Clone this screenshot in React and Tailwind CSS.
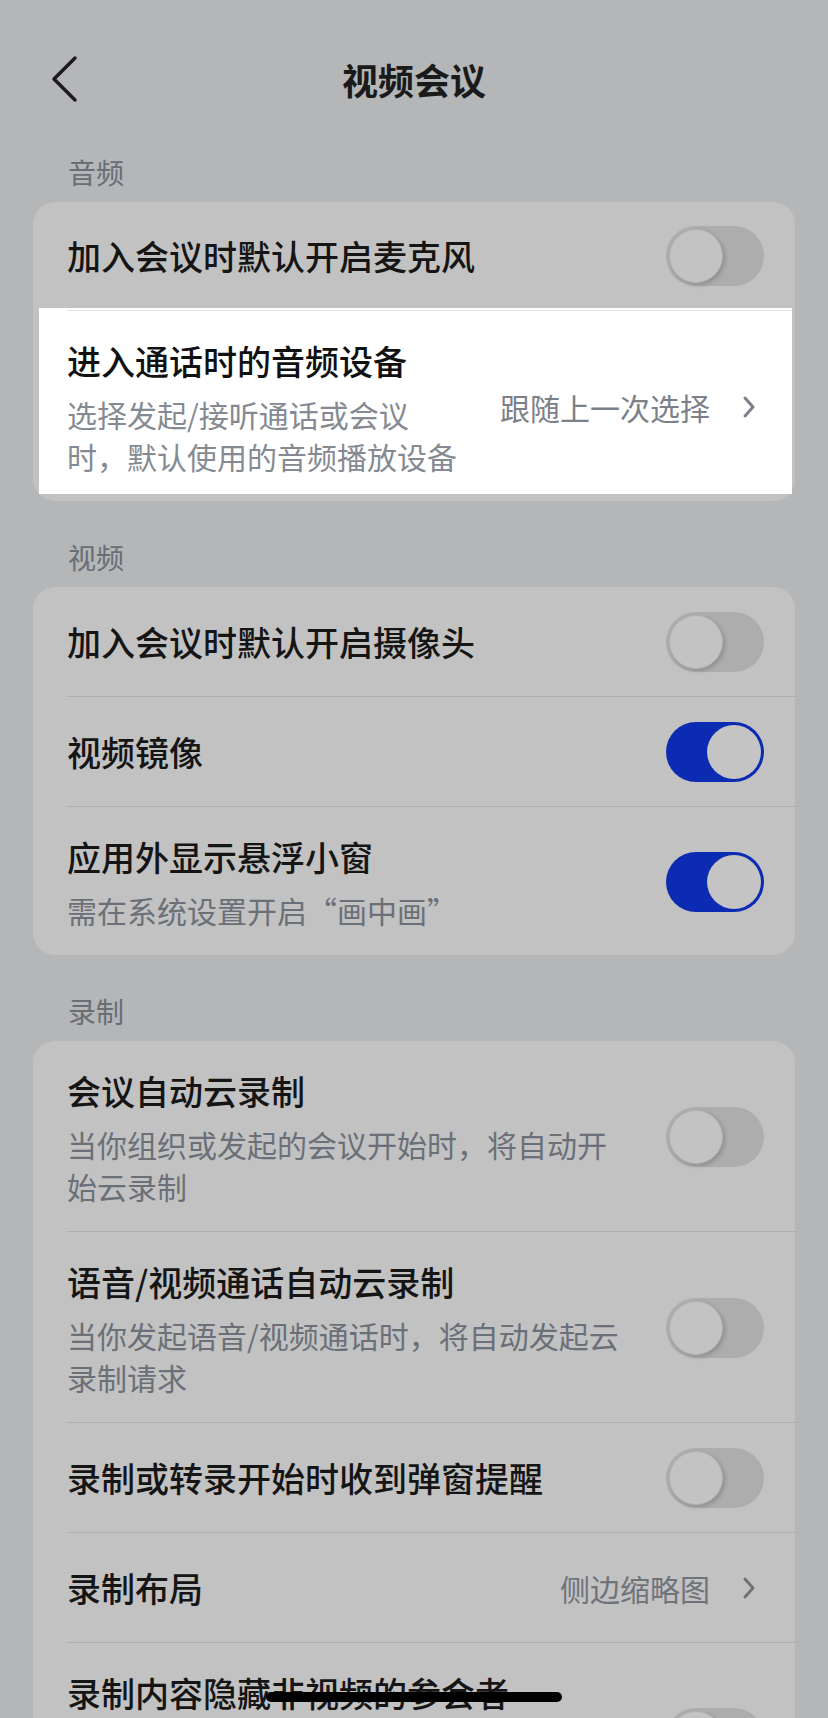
import React from 'react';

const Toggle = ({ on }) =>
  on ? (
    <div className="w-[98px] h-[60px] shrink-0 rounded-full bg-[#0c2bb3] flex items-center justify-end px-[3px]">
      <div className="w-[54px] h-[54px] rounded-full bg-[#c4c4c4]" />
    </div>
  ) : (
    <div className="w-[98px] h-[60px] shrink-0 rounded-full bg-[#adadad] flex items-center px-[3px]">
      <div className="w-[54px] h-[54px] rounded-full bg-[#c3c3c3] border border-[#b3b3b3] shadow-[2px_2px_4px_rgba(0,0,0,0.18)]" />
    </div>
  );

const Chevron = ({ color }) => (
  <svg width="16" height="24" viewBox="0 0 16 24" fill="none" className="shrink-0">
    <path d="M4 3 L12 12 L4 21" stroke={color} strokeWidth="3" strokeLinecap="round" strokeLinejoin="round" />
  </svg>
);

const Value = ({ text, color }) => (
  <div className="flex items-center shrink-0 pr-[7px]">
    <span className="text-[30px] leading-[42px]" style={{ color }}>{text}</span>
    <span className="ml-[31px]">
      <Chevron color={color} />
    </span>
  </div>
);

const Divider = ({ light }) => (
  <div className={`ml-[34px] h-px ${light ? 'bg-[#e4e4e4] mr-[3px]' : 'bg-[#adadad]'}`} />
);

const Row = ({ title, sub, right, white }) => {
  const single = !sub;
  return (
    <div className={`flex items-center pl-[34px] pr-[31px] ${single ? 'h-[109px]' : 'pt-[26px] pb-[24px]'}`}>
      <div className="flex-1 min-w-0">
        <div className={`text-[34px] leading-[48px] font-medium ${white ? 'text-[#111111]' : 'text-[#151515]'}`}>
          {title}
        </div>
        {sub && (
          <div className={`mt-[8px] text-[30px] leading-[42px] ${white ? 'text-[#858a92]' : 'text-[#6b7078]'}`}>
            {sub.map((line) => (
              <div key={line} className="whitespace-nowrap">{line}</div>
            ))}
          </div>
        )}
      </div>
      {right}
    </div>
  );
};

const Section = ({ label, children }) => (
  <div>
    <div className="pt-[36px] pb-[10px] pl-[68px] text-[28px] leading-[40px] text-[#696d74]">{label}</div>
    <div className="mx-[33px] rounded-[22px] bg-[#c2c2c2]">{children}</div>
  </div>
);

export default function App() {
  return (
    <div className="relative w-[828px] h-[1718px] overflow-hidden bg-[#b5b6b8] font-['Noto_Sans_CJK_SC','Noto_Sans',sans-serif]">
      {/* Nav bar */}
      <div className="h-[116px] pt-[44px]">
        <div className="grid grid-cols-[1fr_auto_1fr] items-center h-[70px]">
          <div className="pl-[51px]">
            <svg width="28" height="48" viewBox="0 0 28 48" fill="none">
              <path d="M24 3 L3 24 L24 45" stroke="#1c1c1e" strokeWidth="3.5" strokeLinecap="round" strokeLinejoin="round" />
            </svg>
          </div>
          <div className="text-[36px] leading-[50px] font-semibold text-[#1a1a1a]">视频会议</div>
          <div />
        </div>
      </div>

      <Section label="音频">
        <div className="h-[108px] flex items-center pl-[34px] pr-[31px]">
          <div className="flex-1 text-[34px] leading-[48px] font-medium text-[#151515]">加入会议时默认开启麦克风</div>
          <Toggle />
        </div>
        <div className="relative">
          <div className="absolute -top-[2px] left-[6px] right-[3px] bottom-[7px] bg-white" />
          <div className="relative">
            <Divider light />
            <Row
              white
              title="进入通话时的音频设备"
              sub={['选择发起/接听通话或会议', '时，默认使用的音频播放设备']}
              right={<Value text="跟随上一次选择" color="#7c8089" />}
            />
          </div>
        </div>
      </Section>

      <Section label="视频">
        <Row title="加入会议时默认开启摄像头" right={<Toggle />} />
        <Divider />
        <Row title="视频镜像" right={<Toggle on />} />
        <Divider />
        <Row title="应用外显示悬浮小窗" sub={['需在系统设置开启“画中画”']} right={<Toggle on />} />
      </Section>

      <Section label="录制">
        <Row
          title="会议自动云录制"
          sub={['当你组织或发起的会议开始时，将自动开', '始云录制']}
          right={<Toggle />}
        />
        <Divider />
        <Row
          title="语音/视频通话自动云录制"
          sub={['当你发起语音/视频通话时，将自动发起云', '录制请求']}
          right={<Toggle />}
        />
        <Divider />
        <Row title="录制或转录开始时收到弹窗提醒" right={<Toggle />} />
        <Divider />
        <Row title="录制布局" right={<Value text="侧边缩略图" color="#6f737a" />} />
        <Divider />
        <div className="h-[190px] flex items-center pl-[34px] pr-[31px]">
          <div className="flex-1 self-start pt-[26px] text-[34px] leading-[48px] font-medium text-[#151515]">
            录制内容隐藏非视频的参会者
          </div>
          <Toggle />
        </div>
      </Section>

      {/* Home indicator */}
      <div className="absolute bottom-[16px] left-1/2 -translate-x-1/2 w-[296px] h-[10px] rounded-full bg-black" />
    </div>
  );
}
